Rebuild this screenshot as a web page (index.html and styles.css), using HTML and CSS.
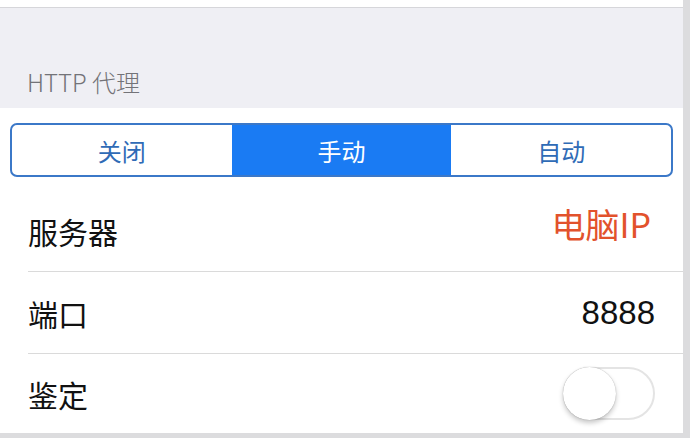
FILE: index.html
```html
<!DOCTYPE html>
<html lang="zh">
<head>
<meta charset="utf-8">
<link rel="stylesheet" href="styles.css">
</head>
<body>
<div class="screen">
  <div class="main">
    <div class="topband"></div>
    <div class="header">HTTP 代理</div>
    <div class="card">
      <div class="segwrap">
        <div class="seg">
          <div class="segitem">关闭</div>
          <div class="segitem active">手动</div>
          <div class="segitem">自动</div>
        </div>
      </div>
      <div class="row">
        <span class="label">服务器</span>
        <span class="value red">电脑IP</span>
      </div>
      <div class="row">
        <span class="label">端口</span>
        <span class="value">8888</span>
      </div>
      <div class="row last">
        <span class="label">鉴定</span>
        <span class="toggle"><span class="knob"></span></span>
      </div>
    </div>
    <div class="bottomband"></div>
  </div>
  <div class="rail"></div>
</div>
</body>
</html>
```

FILE: styles.css
```css
html, body {
  margin: 0;
  padding: 0;
  width: 690px;
  height: 438px;
  overflow: hidden;
  background: #ffffff;
  font-family: "Liberation Sans", "Noto Sans CJK SC", sans-serif;
}
.screen {
  display: flex;
  width: 690px;
  height: 438px;
}
.main {
  flex: 1;
  display: flex;
  flex-direction: column;
}
.rail {
  width: 7px;
  background: #dcdcde;
}
.topband {
  height: 7px;
  background: #ffffff;
  border-bottom: 1px solid #d6d6da;
}
.header {
  height: 100px;
  box-sizing: border-box;
  background: #efeff4;
  padding: 58px 0 0 27px;
  font-size: 24px;
  line-height: 32px;
  color: #737378;
  font-family: "Noto Sans CJK SC", sans-serif;
  font-weight: 300;
}
.card {
  flex: 1;
  background: #ffffff;
  display: flex;
  flex-direction: column;
}
.segwrap {
  padding: 15px 10px 13px 10px;
  height: 82px;
  box-sizing: border-box;
}
.seg {
  display: flex;
  height: 54px;
  box-sizing: border-box;
  border: 2px solid #3b78c8;
  border-radius: 7px;
  overflow: hidden;
}
.segitem {
  flex: 1;
  display: flex;
  align-items: center;
  justify-content: center;
  font-family: "Noto Sans CJK SC", sans-serif;
  font-size: 24px;
  color: #2f6bb6;
}
.segitem.active {
  background: #1a7bf3;
  color: #ffffff;
}
.row {
  height: 82px;
  margin-left: 28px;
  border-bottom: 1px solid #dadada;
  display: flex;
  align-items: center;
  justify-content: space-between;
  padding-right: 28px;
  box-sizing: border-box;
}
.row.last {
  height: 79px;
  border-bottom: none;
}
.label {
  font-family: "Noto Sans CJK SC", sans-serif;
  font-size: 30px;
  color: #111111;
}
.value {
  font-size: 33px;
  color: #111111;
  font-family: "Liberation Sans", "Noto Sans CJK SC", sans-serif;
}
.value.red {
  color: #e2522c;
  font-family: "Noto Sans CJK SC", sans-serif;
  font-size: 34px;
  margin-top: -14px;
  margin-right: 4px;
}
.toggle {
  position: relative;
  width: 92px;
  height: 53px;
  box-sizing: border-box;
  border: 2px solid #e4e4e4;
  border-radius: 27px;
  background: #ffffff;
}
.knob {
  position: absolute;
  left: -2px;
  top: -2px;
  width: 53px;
  height: 53px;
  border-radius: 50%;
  background: #ffffff;
  box-shadow: 0 3px 5px rgba(0,0,0,0.22), 0 0 1px rgba(0,0,0,0.35);
}
.bottomband {
  height: 5px;
  background: #dcdcde;
}
```
